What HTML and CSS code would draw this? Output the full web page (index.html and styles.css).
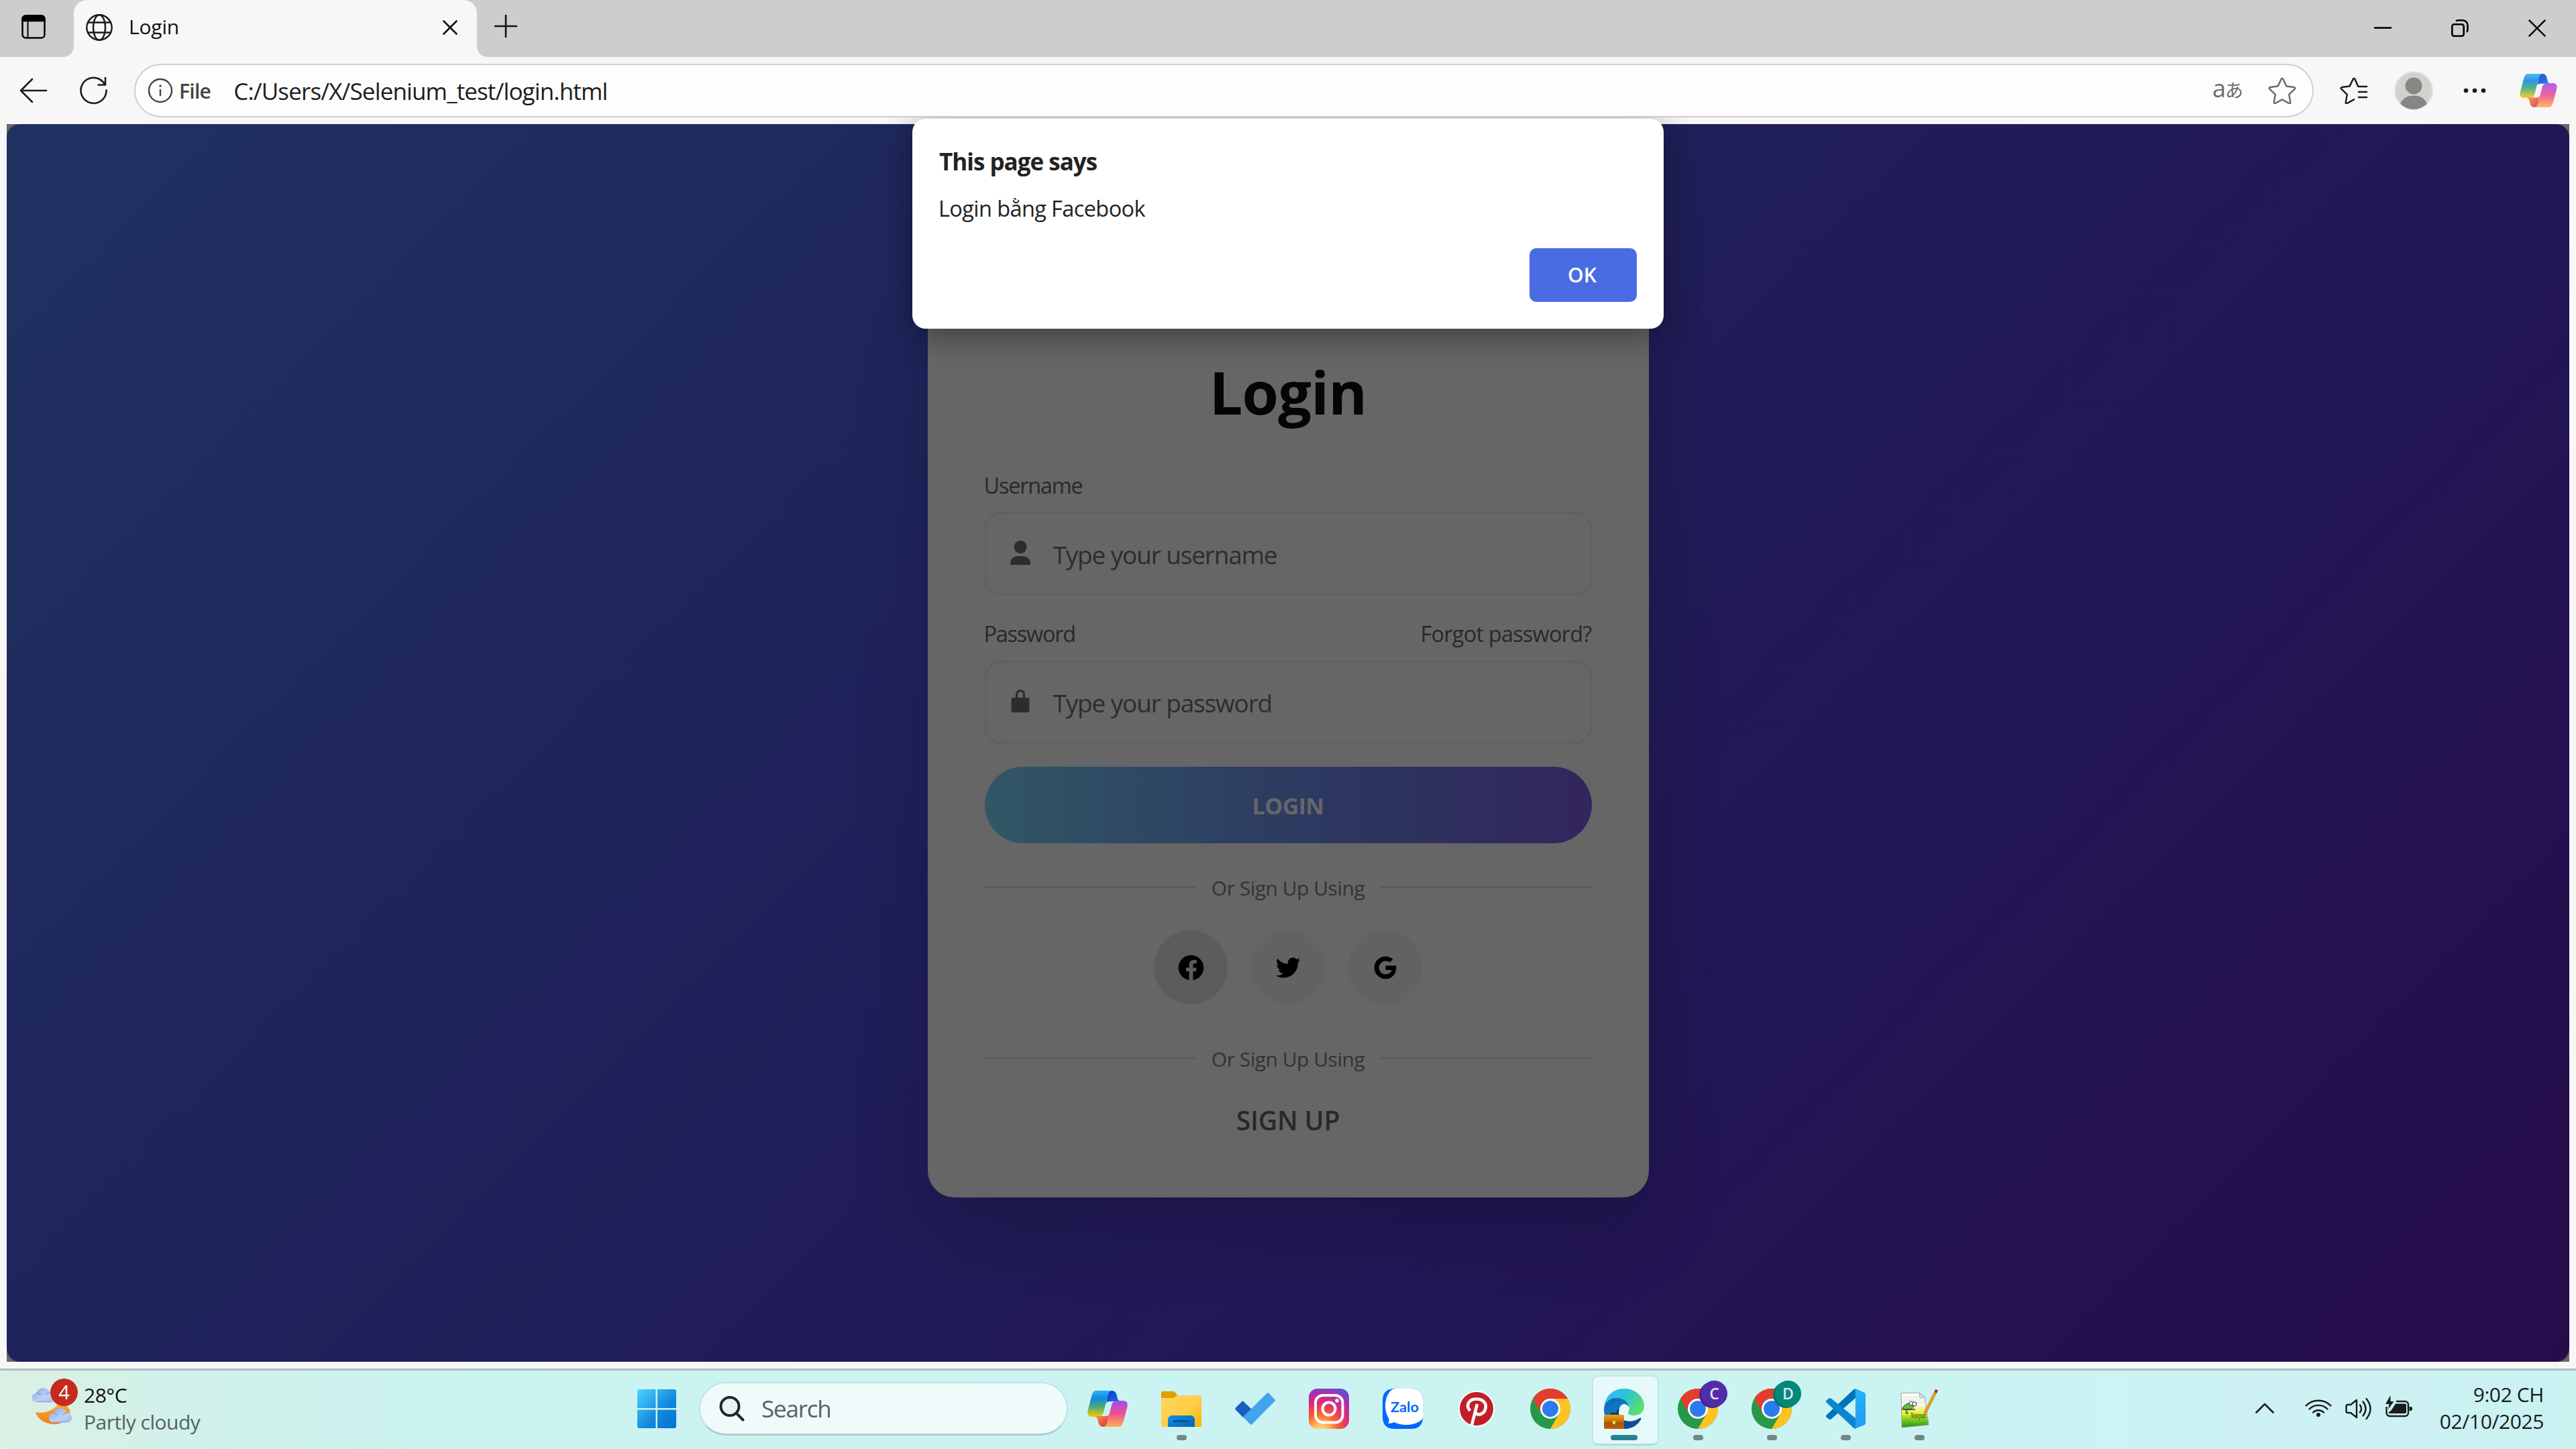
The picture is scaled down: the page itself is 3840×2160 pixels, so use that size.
FILE: index.html
```html
<!DOCTYPE html>
<html lang="vi">
<head>
<meta charset="utf-8">
<title>Login</title>
<link rel="stylesheet" href="styles.css">
</head>
<body>
<svg class="defs" aria-hidden="true">
  <defs>
    <linearGradient id="cpA" x1="0" y1="0" x2="0" y2="1"><stop offset="0" stop-color="#2bb4f5"/><stop offset=".3" stop-color="#1587e0"/><stop offset=".6" stop-color="#42ab78"/><stop offset="1" stop-color="#f8cb0a"/></linearGradient>
    <linearGradient id="cpB" x1="0" y1="0" x2="1" y2="1"><stop offset="0" stop-color="#0b35c8"/><stop offset="1" stop-color="#1a78e8"/></linearGradient>
    <linearGradient id="cpC" x1="0" y1="1" x2="0" y2="0"><stop offset="0" stop-color="#a24df0"/><stop offset=".5" stop-color="#ee5090"/><stop offset="1" stop-color="#fdb154"/></linearGradient>
    <linearGradient id="cpD" x1="0" y1="0" x2="1" y2="1"><stop offset="0" stop-color="#d9303c"/><stop offset="1" stop-color="#ff9a48"/></linearGradient>
    <linearGradient id="win" x1="0" y1="0" x2="1" y2="1"><stop offset="0" stop-color="#4fd3ff"/><stop offset=".6" stop-color="#1287dd"/><stop offset="1" stop-color="#0072cf"/></linearGradient>
    <linearGradient id="fold" x1="0" y1="0" x2="1" y2="1"><stop offset="0" stop-color="#ffd767"/><stop offset=".6" stop-color="#ffcc40"/><stop offset="1" stop-color="#f7b200"/></linearGradient>
    <linearGradient id="drawer" x1="0" y1="0" x2="1" y2="1"><stop offset="0" stop-color="#1490df"/><stop offset="1" stop-color="#0063b8"/></linearGradient>
    <radialGradient id="insta" cx=".3" cy="1.05" r="1.15"><stop offset="0" stop-color="#ffdd78"/><stop offset=".15" stop-color="#fdc060"/><stop offset=".38" stop-color="#f9602e"/><stop offset=".62" stop-color="#dd2a7b"/><stop offset=".85" stop-color="#a232b2"/><stop offset="1" stop-color="#5b51d8"/></radialGradient>
    <linearGradient id="edTop" x1="0" y1=".2" x2="1" y2=".6"><stop offset="0" stop-color="#38b8ff"/><stop offset=".5" stop-color="#2cc3d6"/><stop offset="1" stop-color="#62e062"/></linearGradient>
    <linearGradient id="edMid" x1="0" y1="0" x2=".6" y2="1"><stop offset="0" stop-color="#0c63ae"/><stop offset="1" stop-color="#1490df"/></linearGradient>
    <linearGradient id="edLow" x1="0" y1="0" x2="1" y2="1"><stop offset="0" stop-color="#0a3d78"/><stop offset="1" stop-color="#1456a6"/></linearGradient>
    <linearGradient id="bag" x1="0" y1="0" x2="0" y2="1"><stop offset="0" stop-color="#f0a21c"/><stop offset=".48" stop-color="#c5700a"/><stop offset=".55" stop-color="#a85705"/><stop offset="1" stop-color="#b96208"/></linearGradient>
    <linearGradient id="cloud" x1="0" y1="0" x2="1" y2="1"><stop offset="0" stop-color="#86a9ea"/><stop offset=".6" stop-color="#bfd1f5"/><stop offset="1" stop-color="#9db9ef"/></linearGradient>
    <linearGradient id="moon" x1="0" y1="0" x2="0" y2="1"><stop offset="0" stop-color="#f3b52e"/><stop offset="1" stop-color="#ef7d1c"/></linearGradient>
    <linearGradient id="npp" x1="0" y1="0" x2="0" y2="1"><stop offset="0" stop-color="#fff"/><stop offset=".35" stop-color="#f7f9ea"/><stop offset=".6" stop-color="#e6f02a"/><stop offset=".78" stop-color="#7ccb1c"/><stop offset="1" stop-color="#1f8f1b"/></linearGradient>
    <linearGradient id="vsR" x1="0" y1="0" x2="0" y2="1"><stop offset="0" stop-color="#28b2f6"/><stop offset="1" stop-color="#1f9cf0"/></linearGradient>
    <symbol id="copilot" viewBox="0 0 60 54">
      <path d="M36 0c5 0 7 3 8 8 1 5 2 7 6 8H33c-3 0-4 1-5 3l2-11C31 3 33 0 36 0z" fill="url(#cpB)"/>
      <path d="M13 0h23c-4 1-5 5-6 9l-6 23c-1 5-4 7-9 7H7c-6 0-8-4-6-11L6 9c2-6 3-9 7-9z" fill="url(#cpA)"/>
      <g transform="rotate(180 30 27)">
        <path d="M36 0c5 0 7 3 8 8 1 5 2 7 6 8H33c-3 0-4 1-5 3l2-11C31 3 33 0 36 0z" fill="url(#cpD)"/>
        <path d="M13 0h23c-4 1-5 5-6 9l-6 23c-1 5-4 7-9 7H7c-6 0-8-4-6-11L6 9c2-6 3-9 7-9z" fill="url(#cpC)"/>
      </g>
    </symbol>
    <symbol id="chrome" viewBox="0 0 60 60">
      <circle cx="30" cy="30" r="30" fill="#279847"/>
      <path d="M30 15h26a30 30 0 0 1-26 45l13-22.500z" fill="#fdc322"/>
      <path d="M4 15a30 30 0 0 1 52 0H30a15 15 0 0 0-13 22.500z" fill="#e53c30"/>
      <circle cx="30" cy="30" r="15" fill="#fff"/><circle cx="30" cy="30" r="12" fill="#2c7bee"/>
    </symbol>
    <symbol id="cloudShape" viewBox="0 0 35 23">
      <path d="M7 22.500a7 7 0 0 1-1-14A11 11 0 0 1 26.500 8 7.300 7.300 0 0 1 28 22.500z" fill="url(#cloud)"/>
      <path d="M7 21.500h21" stroke="#8fb0ee" stroke-width="1.500"/>
      <path d="M6 8.500c3-.5 5 1 6.500 3M26.500 8c-3 0-4.500 1.500-5 3.500" stroke="#7fa2e6" stroke-width="1.500" fill="none"/>
    </symbol>
  </defs>
</svg>

<div class="screen">
  <header class="tabstrip">
    <div class="tab-actions">
      <svg width="36" height="36" viewBox="0 0 36 36" fill="none" stroke="#000" stroke-width="2.500"><rect x="1.500" y="1.500" width="33" height="33" rx="5"/><path d="M1.500 9V6a4.500 4.500 0 0 1 4.500-4.500h24A4.500 4.500 0 0 1 34.500 6v3z" fill="#000"/><path d="M9.500 9v25" stroke-width="2"/></svg>
    </div>
    <div class="tab">
      <svg width="40" height="40" viewBox="0 0 40 40" fill="none" stroke="#1b1b1b" stroke-width="2.400"><circle cx="20" cy="20" r="18.700"/><ellipse cx="20" cy="20" rx="9" ry="18.700"/><path d="M3 12.500h34M3 27.500h34"/></svg>
      <span class="tab-title">Login</span>
      <svg class="tab-close" width="22" height="22" viewBox="0 0 22 22" stroke="#111" stroke-width="2.600" stroke-linecap="round"><path d="M1.500 1.500l19 19M20.500 1.500l-19 19"/></svg>
    </div>
    <svg class="new-tab" width="34" height="34" viewBox="0 0 34 34" stroke="#111" stroke-width="2.600" stroke-linecap="round"><path d="M17 1v32M1 17h32"/></svg>
    <div class="window-controls">
      <svg width="26" height="26" viewBox="0 0 26 26" stroke="#000" stroke-width="2.600"><path d="M0 12.500h26"/></svg>
      <svg width="26" height="26" viewBox="0 0 26 26" fill="none" stroke="#000" stroke-width="2.600"><rect x="1.300" y="7.300" width="17.400" height="17.400" rx="3"/><path d="M7 2.500c1-.9 2-1.200 4-1.200h6a7.500 7.500 0 0 1 7.500 7.500v6c0 2-.4 3-1.300 4"/></svg>
      <svg width="26" height="26" viewBox="0 0 26 26" stroke="#000" stroke-width="2.400"><path d="M.8.800l24.400 24.400M25.200.8L.8 25.200"/></svg>
    </div>
  </header>

  <div class="toolbar">
    <svg class="back" width="42" height="38" viewBox="0 0 42 38" fill="none" stroke="#1b1b1b" stroke-width="2.600" stroke-linecap="round" stroke-linejoin="round"><path d="M19 2L2 19l17 17M2 19h38"/></svg>
    <svg class="reload" width="42" height="42" viewBox="0 0 42 42" fill="none" stroke="#1b1b1b" stroke-width="2.600" stroke-linecap="round" stroke-linejoin="round"><path d="M39.500 20.500A19 19 0 1 1 34 7.500l4 5M38 2v10.500H27.500"/></svg>
    <div class="address">
      <svg width="38" height="38" viewBox="0 0 38 38" fill="none" stroke="#444" stroke-width="2.400"><circle cx="19" cy="19" r="17"/><path d="M19 17v10"/><circle cx="19" cy="12" r="1.700" fill="#444" stroke="none"/></svg>
      <span class="scheme">File</span>
      <span class="url">C:/Users/X/Selenium_test/login.html</span>
      <span class="translate">a<span class="kana">あ</span></span>
      <svg class="star" width="42" height="40" viewBox="0 0 42 40" fill="none" stroke="#6b6b6b" stroke-width="2.500" stroke-linejoin="round"><path d="M19.700 2.800q1.300-2 2.600 0l5 10.600 11.700 1.700q2.300.6.800 2.600l-8.600 8.200 2.100 11.700q0 2.200-2 1.400L21 33.400 10.700 39q-2 .8-2-1.400l2.100-11.700-8.600-8.200q-1.500-2 .8-2.600l11.700-1.700z"/></svg>
    </div>
    <svg class="favorites" width="42" height="40" viewBox="0 0 42 40" fill="none" stroke="#1b1b1b" stroke-width="2.500" stroke-linejoin="round" stroke-linecap="round"><path d="M40 14H27.300l-5-11.200q-1.300-2-2.600 0l-5 10.600L3 15.100q-2.300.6-.8 2.600l8.600 8.200-2.100 11.700q0 2.200 2 1.400L21 33.400M28 22h12M28 30h12"/></svg>
    <svg class="profile" width="58" height="58" viewBox="0 0 58 58"><circle cx="29" cy="29" r="28" fill="#d3d1ce" stroke="#e4e3e1" stroke-width="2"/><circle cx="29" cy="22" r="12.500" fill="#888685"/><path d="M9 48.500C13 40 20 36.500 29 36.500S45 40 49 48.500A28 28 0 0 1 9 48.500z" fill="#888685"/></svg>
    <svg class="more" width="34" height="8" viewBox="0 0 34 8" fill="#1b1b1b"><circle cx="4" cy="4" r="3.300"/><circle cx="17" cy="4" r="3.300"/><circle cx="30" cy="4" r="3.300"/></svg>
    <svg class="copilot-small" width="56" height="50"><use href="#copilot"/></svg>
  </div>

  <main class="viewport">
    <div class="page">
      <form class="card">
        <h1>Login</h1>
        <div class="labels"><span class="label">Username</span></div>
        <div class="field">
          <svg width="30" height="36" viewBox="0 0 30 36" fill="#2c2c2c"><circle cx="15" cy="9.500" r="9.500"/><path d="M0 36v-2c0-6 5-11 11-11h8c6 0 11 5 11 11v2z"/></svg>
          <span>Type your username</span>
        </div>
        <div class="labels second"><span class="label">Password</span><span class="forgot">Forgot password?</span></div>
        <div class="field">
          <svg width="30" height="36" viewBox="0 0 30 36" fill="#2c2c2c"><path d="M8 13V8a7 7 0 0 1 14 0v5h3.500a3 3 0 0 1 3 3v16a3 3 0 0 1-3 3h-21a3 3 0 0 1-3-3V16a3 3 0 0 1 3-3zm3.200 0h7.600V8a3.800 3.800 0 0 0-7.600 0z"/></svg>
          <span>Type your password</span>
        </div>
        <div class="login-button">LOGIN</div>
        <div class="divider"><i></i><span>Or Sign Up Using</span><i></i></div>
        <div class="social">
          <span class="round active"><svg width="45" height="45" viewBox="0 0 24 24"><path d="M12.001 2.002c-5.522 0-9.999 4.477-9.999 9.999 0 4.990 3.656 9.126 8.437 9.879v-6.988h-2.540v-2.891h2.540V9.798c0-2.508 1.493-3.891 3.776-3.891 1.094 0 2.240.195 2.240.195v2.459h-1.264c-1.240 0-1.628.772-1.628 1.563v1.875h2.771l-.443 2.891h-2.328v6.988C18.344 21.129 22 16.992 22 12.001c0-5.522-4.477-9.999-9.999-9.999z"/></svg></span>
          <span class="round"><svg width="45" height="45" viewBox="0 0 24 24"><path d="M19.633 7.997c.013.175.013.349.013.523 0 5.325-4.053 11.461-11.460 11.461-2.282 0-4.402-.661-6.186-1.809.324.037.636.050.973.050a8.070 8.070 0 0 0 5.001-1.721 4.036 4.036 0 0 1-3.767-2.793c.249.037.499.062.761.062.361 0 .724-.050 1.061-.137a4.027 4.027 0 0 1-3.230-3.953v-.050c.537.299 1.160.486 1.820.511a4.022 4.022 0 0 1-1.796-3.354c0-.748.199-1.434.548-2.032a11.457 11.457 0 0 0 8.306 4.215c-.062-.3-.1-.611-.1-.923a4.026 4.026 0 0 1 4.028-4.028c1.160 0 2.207.486 2.943 1.272a7.957 7.957 0 0 0 2.556-.973 4.020 4.020 0 0 1-1.771 2.220 8.073 8.073 0 0 0 2.319-.624 8.645 8.645 0 0 1-2.019 2.083z"/></svg></span>
          <span class="round"><svg width="45" height="45" viewBox="0 0 24 24"><path d="M20.283 10.356h-8.327v3.451h4.792c-.446 2.193-2.313 3.453-4.792 3.453a5.270 5.270 0 0 1-5.279-5.280 5.270 5.270 0 0 1 5.279-5.279c1.259 0 2.397.447 3.290 1.178l2.600-2.599c-1.584-1.381-3.615-2.233-5.890-2.233a8.908 8.908 0 0 0-8.934 8.934 8.907 8.907 0 0 0 8.934 8.934c4.467 0 8.529-3.249 8.529-8.934 0-.528-.081-1.097-.202-1.625z"/></svg></span>
        </div>
        <div class="divider lower"><i></i><span>Or Sign Up Using</span><i></i></div>
        <div class="signup">SIGN UP</div>
      </form>
    </div>
  </main>

  <footer class="taskbar">
    <div class="weather">
      <div class="weather-icon">
        <svg width="62" height="62" viewBox="0 0 62 62">
          <path d="M5 39c14 3 30-3 36-16 8 6 14 7 15 14 1 12-11 20-22 20C20 57 8 50 5 39z" fill="url(#moon)"/>
          <use href="#cloudShape" x="0" y="2" width="35" height="23"/>
          <use href="#cloudShape" x="25" y="32" width="35" height="23"/>
        </svg>
        <span class="badge">4</span>
      </div>
      <div class="weather-text"><span class="temp">28°C</span><span class="cond">Partly cloudy</span></div>
    </div>
    <div class="apps">
      <div class="app"><svg width="58" height="58" viewBox="0 0 58 58" fill="url(#win)"><path d="M3 0h24.500v28H0V3a3 3 0 0 1 3-3zM30 0h25a3 3 0 0 1 3 3v25H30zM0 30.500h27.500V58H3a3 3 0 0 1-3-3zM30 30.500h28V55a3 3 0 0 1-3 3H30z"/></svg></div>
      <div class="search">
        <svg width="38" height="38" viewBox="0 0 38 38" fill="none" stroke="#262626" stroke-width="4" stroke-linecap="round"><circle cx="16" cy="15.500" r="13.500" fill="#e9f2f2"/><path d="M26 26l9.500 9.500"/></svg>
        <span>Search</span>
      </div>
      <div class="app"><svg width="60" height="54"><use href="#copilot"/></svg></div>
      <div class="app running"><svg width="60" height="53" viewBox="0 0 60 53"><path d="M0 14V2a2 2 0 0 1 2-2h15c4 0 5 3 7 6v8z" fill="#dfa000"/><path d="M0 10h17c4 0 5-4 8-4h33a2 2 0 0 1 2 2v43a2 2 0 0 1-2 2H2a2 2 0 0 1-2-2z" fill="url(#fold)"/><path d="M10 53V42a6 6 0 0 1 6-6h28a6 6 0 0 1 6 6v11z" fill="url(#drawer)"/><path d="M18 44.500h24" stroke="#0a4a8c" stroke-width="2.500"/></svg></div>
      <div class="app"><svg width="60" height="48" viewBox="0 0 60 48"><path d="M1 22.500L10.500 13q1-1 2 0L25 25 12 37 .8 25.500q-1.200-1.500.2-3z" fill="#1b5cbf"/><path d="M47.500 1q1.500-1.500 3 0l8.500 9q1.500 1.500 0 3L25.500 47q-1.500 1.500-3 0L12 36z" fill="#41a5ee"/></svg></div>
      <div class="app"><svg width="60" height="60" viewBox="0 0 60 60"><rect width="60" height="60" rx="13" fill="url(#insta)"/><g fill="none" stroke="#fff" stroke-width="4"><rect x="10" y="10" width="40.500" height="40.500" rx="11"/><circle cx="30" cy="30" r="9.500"/></g><circle cx="42" cy="18" r="2.700" fill="#fff"/></svg></div>
      <div class="app"><svg width="60" height="60" viewBox="0 0 60 60"><path d="M18 0h24c12 0 18 6 18 18v24c0 12-6 18-18 18H18C6 60 0 54 0 42V18C0 6 6 0 18 0z" fill="#0068ff"/><path d="M12 3C2 14 2 32 9 44c1 3 1 5-1 8 4 0 7-1 9-2 12 6 28 5 38-1 3-2 5-4 5-7V18C60 6 54 0 42 0H20c-4 0-6 1-8 3z" fill="#fff"/><text class="zalo" x="33" y="34.500" text-anchor="middle" textLength="42" lengthAdjust="spacingAndGlyphs">Zalo</text></svg></div>
      <div class="app"><svg width="54" height="54" viewBox="0 0 54 54"><circle cx="27" cy="27" r="26" fill="#c11f26" stroke="#fff" stroke-width="2"/><path d="M17.500 30C11 23 14 12.500 27 12.500c10 0 15 6.500 13.500 13.500-1.500 9-11 12-15 7M28 20l-8 31" fill="none" stroke="#fff" stroke-width="4.600"/></svg></div>
      <div class="app"><svg width="60" height="60"><use href="#chrome"/></svg></div>
      <div class="app running current"><svg width="60" height="60" viewBox="0 0 60 60">
        <path d="M0 30C1 12 13 0 30 0c18 0 30 13 30 26 0 9-7 14-15 14-6 0-9-2-9-4s2-3 2-7c0-6-8-14-19-14C10 15 3 21 0 30z" fill="url(#edTop)"/>
        <path d="M0 31c1-11 9-17 18-17 11 0 19 6 19 14-1-3-4-5-7-5-5 0-8 6-8 13 0 12 8 20 16 23-3 1-5 1-8 1C12 60 0 47 0 31z" fill="url(#edMid)"/>
        <path d="M23 30c-3 8 1 16 10 18 9 2 15-1 20-4 2-1 3 0 2 2-5 9-14 14-24 14-8-2-15-12-14-20 0-5 2-8 6-10z" fill="url(#edLow)"/>
        <path d="M11 40v-3h9v3" fill="none" stroke="#333" stroke-width="2.500"/><rect y="39" width="30" height="21" rx="2" fill="url(#bag)"/><rect x="13" y="48" width="4" height="5" fill="#ffd23c"/></svg></div>
      <div class="app running"><svg width="60" height="60"><use href="#chrome"/></svg><span class="user violet">C</span></div>
      <div class="app running"><svg width="60" height="60"><use href="#chrome"/></svg><span class="user teal">D</span></div>
      <div class="app running"><svg width="60" height="60" viewBox="0 0 60 60"><path d="M1.500 39.500q-1.500 1.500 0 3l4 3q1.500 1 3 0L45 14V0.500q-1-.5-3 1z" fill="#0074bb"/><path d="M1.500 20.500q-1.500-1.500 0-3l4-3q1.500-1 3 0L45 44v15.500q-1 .5-3-1z" fill="#0a86d1"/><path d="M45 0l13.500 6q1.500 1 1.500 3v42q0 2-1.500 3L44 60q.8-1 .8-3V3q0-2-.8-3z" fill="url(#vsR)"/></svg></div>
      <div class="app running"><svg width="60" height="60" viewBox="0 0 60 60">
        <path d="M3 7l27-1 8 7 6 41L4 58z" fill="url(#npp)" stroke="#9aa3a3" stroke-width="1"/><path d="M30 6l1 8 7-1z" fill="#dfe3e6" stroke="#8a9090" stroke-width=".8"/>
        <path d="M5 13h24M5 17h33M5 21h33" stroke="#c9cfe4" stroke-width=".8"/>
        <path d="M5 30c2-6 7-8 12-8l5 4-4 5c-4 0-8 1-8 5 1 3 4 1 3-1" fill="#5cc043" stroke="#333" stroke-width="1"/><path d="M4 31h20" stroke="#4a3a20" stroke-width="1.500"/>
        <circle cx="18" cy="22" r="3" fill="#fff" stroke="#333"/><circle cx="23" cy="23" r="3" fill="#fff" stroke="#333"/>
        <text class="npp-text" x="17" y="44" textLength="23" lengthAdjust="spacingAndGlyphs">Notepad</text>
        <path d="M54 2l3 1.500-16 32-4 4 1-6z" fill="#f0a31c" stroke="#b06a10" stroke-width=".7"/><path d="M54.500 1l3.500 1.800-2 4-3.500-1.800z" fill="#a5262c"/></svg></div>
    </div>
    <div class="tray">
      <svg class="chevron" width="28" height="16" viewBox="0 0 28 16" fill="none" stroke="#161c1c" stroke-width="2.600" stroke-linecap="round" stroke-linejoin="round"><path d="M1.500 14.500L14 2l12.500 12.500"/></svg>
      <svg class="wifi" width="40" height="30" viewBox="0 0 40 30" fill="none" stroke="#161c1c" stroke-width="2.400" stroke-linecap="round"><path d="M1.500 12.500a26 26 0 0 1 37 0M6.500 17.500a19 19 0 0 1 27 0M12 22.500a11.500 11.500 0 0 1 16 0"/><circle cx="20" cy="26" r="3" fill="#161c1c" stroke="none"/></svg>
      <svg class="volume" width="40" height="34" viewBox="0 0 40 34" fill="none" stroke="#161c1c" stroke-width="2.400" stroke-linecap="round" stroke-linejoin="round"><path d="M17 4v26l-9-7H3.500a2 2 0 0 1-2-2v-8a2 2 0 0 1 2-2H8zM22 11.500q4 5.500 0 11M26.500 6.500q8 10.500 0 21M31.500 2q12 15 0 30"/></svg>
      <svg class="battery" width="41" height="34" viewBox="0 0 41 34"><path d="M16 9h13a5 5 0 0 1 5 5v12a5 5 0 0 1-5 5H6.500a5 5 0 0 1-5-5v-9" fill="none" stroke="#161c1c" stroke-width="2.400"/><path d="M15 12.500h14a2 2 0 0 1 2 2v10.500a2 2 0 0 1-2 2H6.500a2 2 0 0 1-2-1.500l4-3zM35.500 17h2.500a2.500 2.500 0 0 1 2 2.500v1a2.500 2.500 0 0 1-2 2.500h-2.500z" fill="#161c1c"/><path d="M7.500 0L0 13h5.500L4 21l8.500-12H7.500z" fill="#161c1c"/></svg>
      <div class="clock"><span>9:02 CH</span><span>02/10/2025</span></div>
    </div>
  </footer>

  <div class="dialog">
    <div class="dialog-title">This page says</div>
    <div class="dialog-message">Login bằng Facebook</div>
    <div class="dialog-ok">OK</div>
  </div>
</div>
</body>
</html>
```
FILE: styles.css
```css
* { box-sizing: border-box; }
body { margin: 0; font-family: "Open Sans", "Noto Sans", sans-serif; }
svg { display: block; flex: none; }
.defs { position: absolute; width: 0; height: 0; }
.screen {
  position: relative;
  width: 3840px;
  height: 2160px;
  overflow: hidden;
  display: flex;
  flex-direction: column;
  background: #f7f7f7;
}

/* Tab strip */
.tabstrip { height: 85px; flex: none; display: flex; background: #cdcdcd; }
.tab-actions { width: 110px; padding: 22px 0 0 32px; }
.tab {
  position: relative;
  width: 601px;
  padding: 0 29px 4px 18px;
  display: flex;
  align-items: center;
  background: #f7f7f7;
  border-radius: 20px 20px 0 0;
}
.tab::before, .tab::after { content: ""; position: absolute; bottom: 0; width: 16px; height: 16px; }
.tab::before { left: -16px; background: radial-gradient(circle at 0 0, transparent 15.500px, #f7f7f7 16.500px); }
.tab::after { right: -16px; background: radial-gradient(circle at 100% 0, transparent 15.500px, #f7f7f7 16.500px); }
.tab-title { margin-left: 24px; font-size: 30px; line-height: 40px; padding-bottom: 2px; color: #111; letter-spacing: -.2px; }
.tab-close { margin-left: auto; }
.new-tab { margin: 22px 0 0 26px; }
.window-controls { margin-left: auto; padding: 29px 45px 0 0; display: flex; gap: 89px; }

/* Toolbar */
.toolbar { height: 100px; flex: none; display: flex; align-items: center; padding-left: 29px; }
.back { margin-right: 48px; }
.reload { margin-right: 39px; }
.address {
  width: 3249px;
  height: 80px;
  padding: 0 24px 0 18px;
  display: flex;
  align-items: center;
  background: #fdfdfd;
  border: 2px solid #cfcfcf;
  border-radius: 40px;
}
.scheme { margin-left: 9px; font-size: 30px; font-weight: 600; color: #444; letter-spacing: -.7px; }
.url { margin-left: 34px; font-size: 35px; color: #1d1d1d; letter-spacing: -.86px; }
.translate { margin-left: auto; display: flex; align-items: baseline; font-size: 36px; line-height: 44px; color: #6b6b6b; padding-bottom: 5px; }
.kana { font-family: "Noto Sans CJK JP", sans-serif; font-size: 27px; margin-left: -1px; }
.star { margin-left: 37px; }
.favorites { margin-left: 39px; }
.profile { margin-left: 39px; }
.more { margin-left: 45px; }
.copilot-small { margin-left: 50px; opacity: .88; }

/* Page area */
.viewport { width: 3820px; height: 1845px; margin: 0 10px; flex: none; background: #666; }
.page {
  height: 100%;
  display: flex;
  align-items: center;
  justify-content: center;
  border-radius: 20px;
  background: linear-gradient(135deg, #203261 0%, #1f245b 34%, #201d58 50%, #221755 67%, #270c4b 100%);
}
.card {
  width: 1075px;
  height: 1355px;
  padding: 94px 85px 0;
  background: #666;
  border-radius: 40px;
  box-shadow: 0 50px 110px rgba(0, 0, 0, .16);
}
h1 { margin: 0 0 58px; font-size: 88px; line-height: 120px; font-weight: 700; letter-spacing: -.8px; text-align: center; color: #050505; }
.labels { display: flex; justify-content: space-between; font-size: 32.500px; line-height: 44px; margin-bottom: 18px; color: #292929; }
.label { letter-spacing: -1.250px; margin-left: -1px; }
.forgot { letter-spacing: -.8px; }
.second { margin-top: 36px; }
.field {
  height: 123px;
  padding: 2px 36px 0;
  display: flex;
  align-items: center;
  gap: 34px;
  border: 2px solid #5f5f5f;
  border-radius: 25px;
  font-size: 37px;
  letter-spacing: -1.150px;
  color: #2d2d2d;
}
.field svg { margin-bottom: 5px; }
.login-button {
  height: 114px;
  margin-top: 35px;
  border-radius: 57px;
  background: linear-gradient(90deg, #315765, #2d3f62 42%, #2d325e 70%, #33255e);
  font-size: 34px;
  font-weight: 700;
  letter-spacing: -.6px;
  line-height: 116px;
  text-align: center;
  color: #666;
}
.divider { display: flex; align-items: center; gap: 24px; margin-top: 44px; font-size: 30px; line-height: 42px; letter-spacing: -.5px; color: #333; }
.divider span { padding-top: 2px; margin-bottom: -2px; }
.divider i { flex: 1; height: 3px; background: #5c5c5c; }
.social { display: flex; justify-content: center; gap: 35px; margin-top: 44px; }
.round { width: 110px; height: 110px; display: flex; align-items: center; justify-content: center; border-radius: 50%; background: #626262; }
.active { background: #5c5c5c; }
.lower { margin-top: 59px; }
.signup { margin-top: 45px; font-size: 39.200px; line-height: 54px; font-weight: 600; letter-spacing: -.2px; text-align: center; color: #292929; }

/* Alert over the page */
.dialog {
  position: absolute;
  left: 1360px;
  top: 177px;
  width: 1120px;
  height: 313px;
  padding: 40px 40px 40px 39px;
  display: flex;
  flex-direction: column;
  background: #fff;
  border-radius: 20px;
  box-shadow: 0 10px 50px rgba(0, 0, 0, .4);
  clip-path: inset(-3px -90px -90px -90px);
  color: #222;
}
.dialog-title { font-size: 35px; line-height: 48px; font-weight: 700; letter-spacing: -1px; padding-left: 1px; }
.dialog-message { margin-top: 24px; font-size: 32.500px; line-height: 44px; letter-spacing: -.6px; }
.dialog-ok {
  align-self: flex-end;
  width: 160px;
  height: 80px;
  margin-top: 37px;
  border-radius: 10px;
  background: #4a6ce3;
  color: #fff;
  font-size: 30px;
  font-weight: 600;
  line-height: 79px;
  padding-right: 3px;
  text-align: center;
}

/* Taskbar */
.taskbar {
  height: 120px;
  margin-top: 10px;
  flex: none;
  display: grid;
  grid-template-columns: 924px auto 1fr;
  border-top: 3px solid #a9c0be;
  background: linear-gradient(90deg, #dcf0e4 0, #d1f1ea 260px, #cbf3f0 700px, #cbf3f2 2900px, #cef1f4 3500px, #caf2f1 100%);
}
.weather { display: flex; padding: 23px 0 0 48px; }
.weather-icon { position: relative; width: 62px; }
.badge {
  position: absolute;
  left: 27px;
  top: -11px;
  width: 41px;
  height: 41px;
  border-radius: 50%;
  background: #c42b1c;
  color: #fff;
  font-size: 29px;
  line-height: 40px;
  text-align: center;
}
.weather-text { margin: -6px 0 0 15px; display: flex; flex-direction: column; font-size: 30px; line-height: 40px; letter-spacing: -.5px; }
.temp { color: #111; }
.cond { color: #55625f; }
.apps { display: flex; padding-top: 7px; }
.app { position: relative; width: 110px; height: 100px; display: flex; align-items: center; justify-content: center; }
.app.running::after { content: ""; position: absolute; left: 48px; bottom: 3px; width: 15px; height: 8px; border-radius: 4px; background: #728886; }
.app.current::before { content: ""; position: absolute; left: 7px; top: 0; width: 96px; height: 100px; border-radius: 10px; background: #e6f9f9; border: 2px solid #c0e6e5; border-bottom: 3px solid #b5dada; }
.app.current svg { position: relative; }
.app.current::after { left: 35px; width: 40px; background: #248293; }
.search {
  width: 550px;
  height: 80px;
  margin: 10px 4px 0 8px;
  padding: 0 28px;
  display: flex;
  align-items: center;
  gap: 25px;
  border: 2px solid #bee5e3;
  border-bottom: 3px solid #adcccb;
  border-radius: 40px;
  background: #effbfb;
  font-size: 35px;
  letter-spacing: -1.200px;
  color: #5a6161;
}
.zalo { font: 700 21px Lato, sans-serif; fill: #0068ff; }
.npp-text { font: italic 13px "Liberation Serif", serif; fill: #26331a; }
.user { position: absolute; left: 60px; top: 8px; width: 39px; height: 39px; border-radius: 50%; color: #e6e0f4; font-size: 23px; line-height: 38px; font-weight: 600; text-align: center; }
.violet { background: #512da8; box-shadow: -3px 2px 0 #43258d; }
.teal { background: #00897b; box-shadow: -3px 2px 0 #007569; }
.tray { display: flex; align-items: flex-start; padding-right: 48px; justify-content: flex-end; }
.chevron { margin: 48px 46px 0 0; }
.wifi { margin: 40px 20px 0 0; }
.volume { margin: 40px 20px 0 0; }
.battery { margin: 37px 37px 0 0; }
.clock { width: 158px; padding-top: 16px; display: flex; flex-direction: column; align-items: flex-end; font-size: 30px; line-height: 40px; letter-spacing: -.4px; color: #161c1c; white-space: nowrap; }
```
